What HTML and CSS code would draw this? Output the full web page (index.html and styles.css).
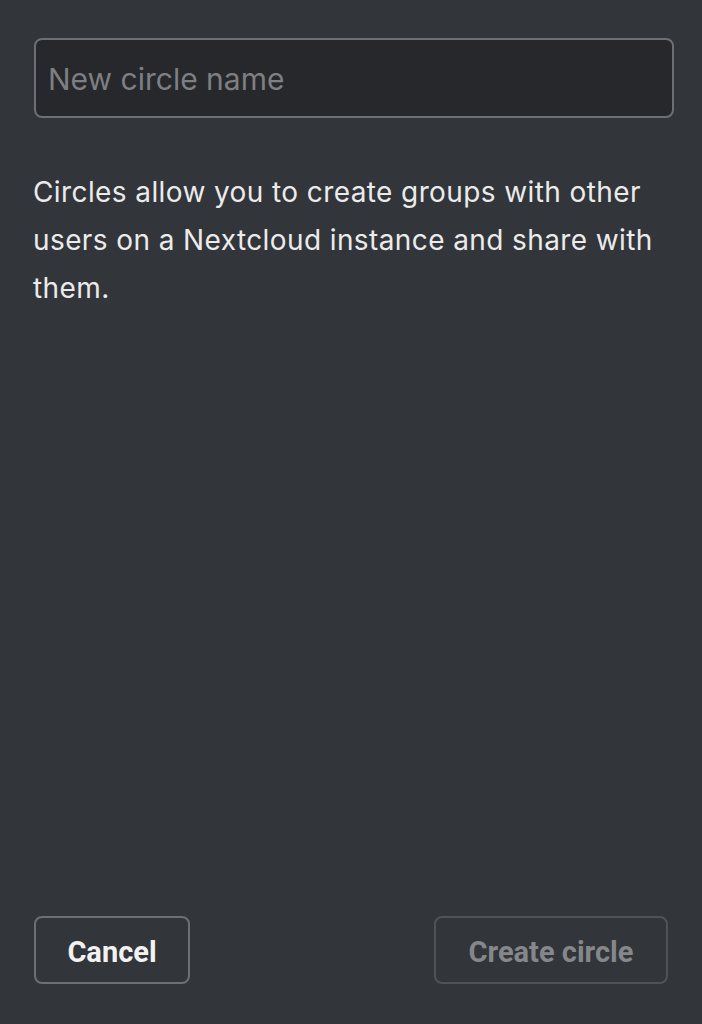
FILE: index.html
```html
<!DOCTYPE html>
<html>
<head>
<meta charset="utf-8">
<link rel="stylesheet" href="styles.css">
</head>
<body>
<div class="dialog">
  <input class="name-input" type="text" placeholder="New circle name">
  <p class="info">Circles allow you to create groups with other users on a Nextcloud instance and share with them.</p>
  <div class="actions">
    <button class="btn btn-cancel">Cancel</button>
    <button class="btn btn-create" disabled>Create circle</button>
  </div>
</div>
</body>
</html>
```
FILE: styles.css
```css
html, body {
  margin: 0;
  padding: 0;
  height: 100%;
  background: #32353a;
}
body {
  font-family: Inter, Roboto, "Noto Sans", sans-serif;
}
.dialog {
  box-sizing: border-box;
  height: 1024px;
  padding: 38px 28px 40px 34px;
  display: flex;
  flex-direction: column;
}
.name-input {
  box-sizing: border-box;
  width: 640px;
  height: 80px;
  border: 2px solid #6c6f74;
  border-radius: 8px;
  background: #26282c;
  color: #e8e8e8;
  font-family: Inter, Roboto, sans-serif;
  font-size: 30px;
  padding: 2px 12px 0;
  outline: none;
}
.name-input::placeholder {
  color: #7d7f83;
}
.info {
  margin: 50px 0 0 -1px;
  color: #ebebeb;
  font-size: 28px;
  letter-spacing: 0.4px;
  line-height: 48px;
  width: 640px;
}
.actions {
  margin-top: auto;
  margin-right: 6px;
  display: flex;
  justify-content: space-between;
}
.btn {
  box-sizing: border-box;
  height: 68px;
  border-radius: 8px;
  background: transparent;
  font-family: Roboto, Inter, sans-serif;
  font-weight: 700;
  font-size: 29px;
  padding: 4px 0 0;
}
.btn-cancel {
  width: 156px;
  border: 2px solid #6c6f74;
  color: #f2f2f2;
}
.btn-create {
  width: 234px;
  border: 2px solid #4f5257;
  color: #85878b;
}
```
